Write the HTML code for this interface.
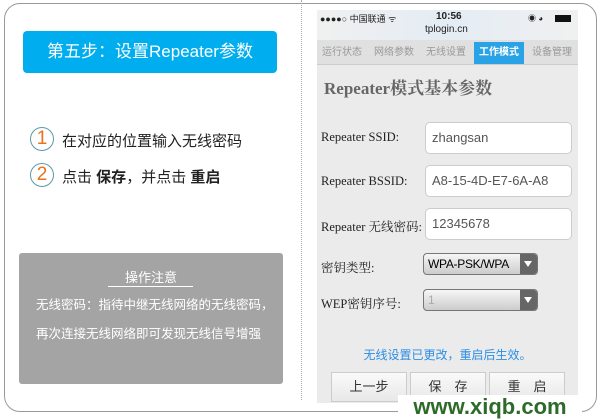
<!DOCTYPE html>
<html><head><meta charset="utf-8"><style>
*{margin:0;padding:0;box-sizing:border-box}
body{width:600px;height:419px;background:#fff;position:relative;overflow:hidden;font-family:"Liberation Sans","Noto Sans CJK SC",sans-serif}
.a{position:absolute}
.outer{left:4px;top:3px;width:593px;height:409px;border:1.5px solid #999;border-radius:16px}
.title{left:23px;top:31px;width:254px;height:42px;background:#00aeef;border-radius:4px;color:#fff;font-size:17px;text-align:center;line-height:42px}
.circ{width:24px;height:24px;border:1.5px solid #5a9aa8;border-radius:50%;color:#e8731a;font-size:19px;text-align:center;line-height:22px}
.step{font-size:15px;color:#222}
.note{left:19px;top:253px;width:264px;height:131px;background:#a4a4a4;border-radius:3px;color:#fff;font-size:12.5px}
.phone{left:317px;top:10px;width:261px;height:393px;background:#ebebeb}
.tab{position:absolute;top:32px;height:22px;font-size:10px;color:#999;text-align:center;line-height:22px}
.lbl{position:absolute;left:4px;font-family:"Liberation Serif","Noto Serif CJK SC",serif;font-size:12.5px;color:#222}
.inp{position:absolute;left:108px;width:147px;height:32px;background:#fff;border:1px solid #ccc;border-radius:5px;font-size:13px;color:#555;padding-left:6px;line-height:30px}
.sel{position:absolute;left:106px;width:115px;height:22px;border:1px solid #777;border-radius:4px;background:linear-gradient(#f6f6f6,#ccc);font-size:12px;line-height:20px;padding-left:4px;letter-spacing:-0.3px;overflow:hidden;white-space:nowrap}
.sel b{position:absolute;right:0;top:0;width:17px;height:20px;background:#666;border-radius:0 3px 3px 0}
.sel b:after{content:"";position:absolute;left:4px;top:7px;border-left:4.5px solid transparent;border-right:4.5px solid transparent;border-top:6px solid #fff}
.btn{position:absolute;top:362px;width:76px;height:30px;background:linear-gradient(#fafafa,#e8e8e8);border:1px solid #ccc;font-size:13px;color:#333;text-align:center;line-height:28px}
</style></head><body>
<div class="a outer"></div>
<div class="a" style="left:301px;top:0;height:400px;border-left:1px dotted #aaa"></div>
<div class="a title">第五步：设置Repeater参数</div>
<div class="a circ" style="left:30px;top:127px">1</div>
<div class="a step" style="left:62px;top:130px">在对应的位置输入无线密码</div>
<div class="a circ" style="left:30px;top:163px">2</div>
<div class="a step" style="left:62px;top:166px">点击 <b>保存</b>，并点击 <b>重启</b></div>
<div class="a note">
<div class="a" style="left:0;width:264px;top:14px;text-align:center;font-size:13px">操作注意</div>
<div class="a" style="left:89px;top:33px;width:85px;border-top:1px solid #fff"></div>
<div class="a" style="left:17px;top:41px">无线密码：指待中继无线网络的无线密码，</div>
<div class="a" style="left:17px;top:70px">再次连接无线网络即可发现无线信号增强</div>
</div>
<div class="a phone">
<div class="a" style="left:0;top:0;width:261px;height:30px;background:linear-gradient(90deg,#f0f0f0,#e4ecf4 50%,#f0f0f0)"></div>
<div class="a" style="left:3px;top:2px;font-size:9px;color:#222">●●●●○ 中国联通 ᯤ</div>
<div class="a" style="left:119px;top:1px;font-size:10px;font-weight:bold;color:#222">10:56</div>
<div class="a" style="left:108px;top:14px;font-size:10px;color:#222">tplogin.cn</div>
<div class="a" style="left:211px;top:3px;font-size:8px;color:#222">◉ ◕</div>
<div class="a" style="left:238px;top:5px;width:16px;height:7px;background:#111"></div>
<div class="a" style="left:0;top:30px;width:261px;height:25px;background:#e0e0e0;border-bottom:1px solid #ccc"></div>
<div class="tab" style="left:0;width:50px">运行状态</div>
<div class="tab" style="left:52px;width:50px">网络参数</div>
<div class="tab" style="left:104px;width:50px">无线设置</div>
<div class="tab" style="left:157px;width:50px;background:#2aa3e6;color:#fff;font-weight:bold">工作模式</div>
<div class="tab" style="left:209px;width:52px">设备管理</div>
<div class="a" style="left:7px;top:64px;font-family:'Liberation Serif','Noto Serif CJK SC',serif;font-size:17px;font-weight:bold;color:#666">Repeater模式基本参数</div>
<div class="lbl" style="top:120px">Repeater SSID:</div>
<div class="inp" style="top:112px">zhangsan</div>
<div class="lbl" style="top:164px">Repeater BSSID:</div>
<div class="inp" style="top:155px">A8-15-4D-E7-6A-A8</div>
<div class="lbl" style="top:207px">Repeater 无线密码:</div>
<div class="inp" style="top:198px">12345678</div>
<div class="lbl" style="top:248px">密钥类型:</div>
<div class="sel" style="top:243px">WPA-PSK/WPA<b></b></div>
<div class="lbl" style="top:284px">WEP密钥序号:</div>
<div class="sel" style="top:279px;color:#aaa">1<b></b></div>
<div class="a" style="left:0;width:261px;top:336px;text-align:center;font-size:12px;color:#2b8ee6">无线设置已更改，重启后生效。</div>
<div class="btn" style="left:14px">上一步</div>
<div class="btn" style="left:93px">保　存</div>
<div class="btn" style="left:172px">重　启</div>
</div>
<div class="a" style="left:398px;top:395px;width:184px;height:24px;background:#fff;color:#2e6b2a;font-size:22px;font-weight:bold;text-align:center;line-height:24px">www.xiqb.com</div>
</body></html>
